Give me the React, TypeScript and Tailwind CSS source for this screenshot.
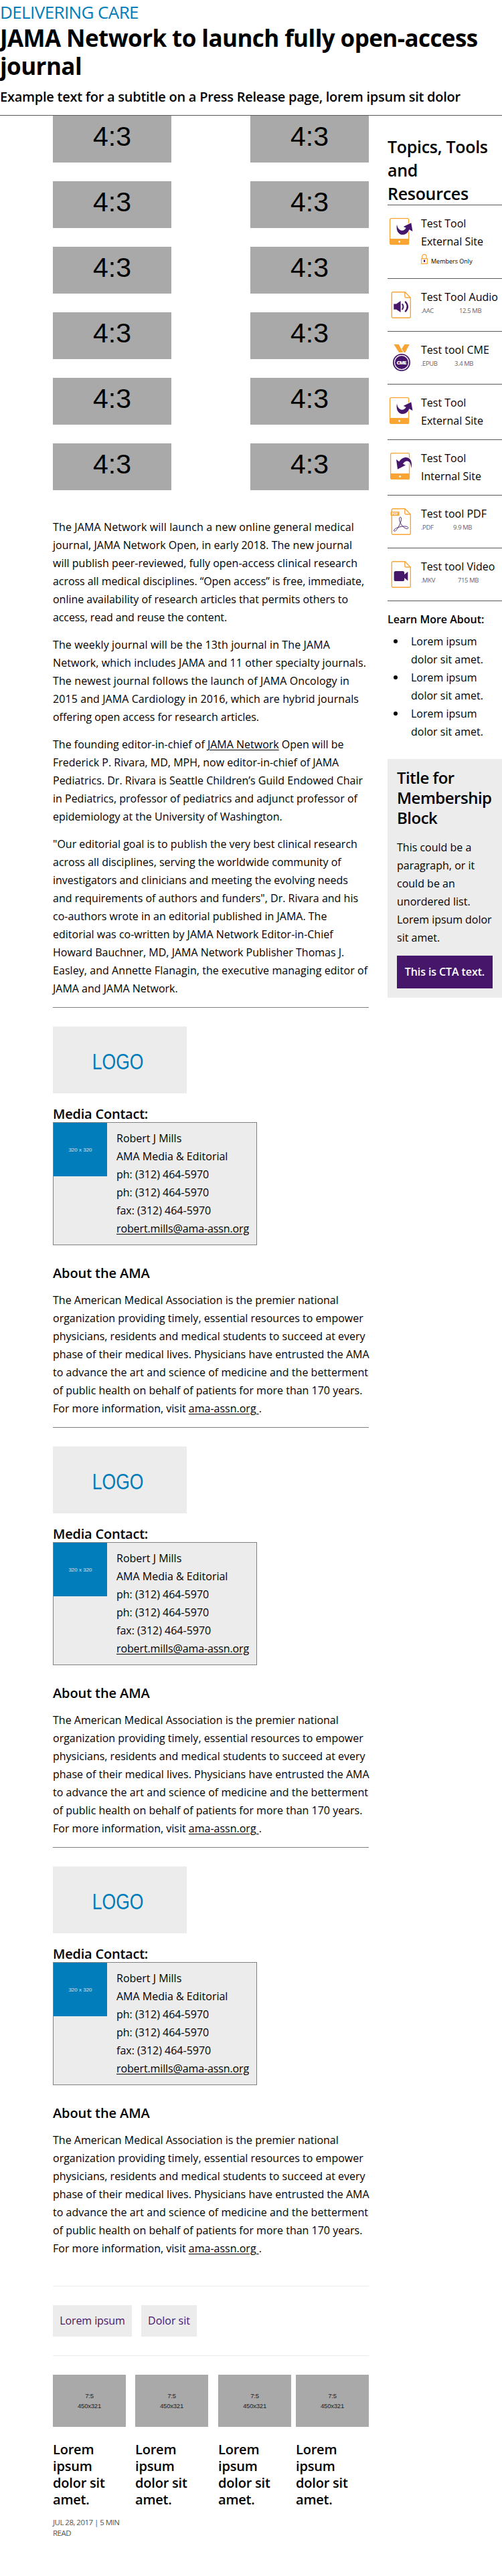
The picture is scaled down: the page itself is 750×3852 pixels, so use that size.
import type { ReactNode } from "react";

const ORANGE = "#f9a533";
const PURPLE = "#46166b";

/* ---------- icons ---------- */

function Tablet({ children, shift }: { children: ReactNode; shift: string }) {
  return (
    <svg className={`h-10 w-[36px] overflow-visible ${shift}`} viewBox="0 0 36 40">
      <rect x="0.6" y="0.6" width="28" height="38.8" rx="2" fill="#fff" stroke={ORANGE} strokeWidth="1.3" />
      <path d="M0.3 31H29v7a2 2 0 0 1-2 2H2.3a2 2 0 0 1-2-2Z" fill={ORANGE} />
      <circle cx="14.6" cy="35.5" r="1.4" fill="#fff" />
      {children}
    </svg>
  );
}

function ExternalIcon() {
  return (
    <Tablet shift="ml-[3px]">
      <path
        d="M11 9.5C9.3 18 13 25 19.3 25C24.3 25 27.7 22 29.3 17.3L34.5 20L32.3 7.3L20.7 13L24.6 14.8C23 17.7 20.7 19.2 18.2 18.8C14.5 18.2 11.8 15 11 9.5Z"
        fill={PURPLE}
        stroke="#fff"
        strokeWidth="1.6"
        paintOrder="stroke"
      />
    </Tablet>
  );
}

function InternalIcon() {
  return (
    <Tablet shift="ml-[4px]">
      <path
        d="M9 10L11 24.7L23 18.5L19 16.7C20.6 13.6 23.3 11.9 26 12.5C29.3 13.2 31 17 31.3 23C33.6 15 30.5 7.3 24 7.1C19.3 7 15.8 9.6 13.4 13.2Z"
        fill={PURPLE}
        stroke="#fff"
        strokeWidth="1.6"
        paintOrder="stroke"
      />
    </Tablet>
  );
}

function Doc({ children }: { children: ReactNode }) {
  return (
    <svg className="ml-[5px] h-10 w-[31px] overflow-visible" viewBox="-0.6 0 31 40">
      <path
        d="M2.2 0.7H20.5L28.7 9.2V37.8a1.5 1.5 0 0 1-1.5 1.5H2.2a1.5 1.5 0 0 1-1.5-1.5V2.2a1.5 1.5 0 0 1 1.5-1.5Z"
        fill="#fff"
        stroke={ORANGE}
        strokeWidth="1.4"
      />
      <path d="M20.3 0.7V7.7a1.3 1.3 0 0 0 1.3 1.3H28.7" fill="none" stroke={ORANGE} strokeWidth="1.4" />
      {children}
    </svg>
  );
}

function AudioIcon() {
  return (
    <Doc>
      <path d="M3.7 18.5H7.5L14 14V31L7.5 26.7H3.7Z" fill={PURPLE} />
      <path d="M16.2 18.3Q19.4 22.6 16.2 27" fill="none" stroke={PURPLE} strokeWidth="2" />
      <path d="M20.6 14.8Q28 22.6 20.6 30.2" fill="none" stroke={PURPLE} strokeWidth="2.3" />
    </Doc>
  );
}

function VideoIcon() {
  return (
    <Doc>
      <rect x="4" y="15" width="15.6" height="15" rx="2.6" fill={PURPLE} />
      <path d="M18.5 21L24.8 15.8V29.4L18.5 24.3Z" fill={PURPLE} />
    </Doc>
  );
}

function PdfIcon() {
  return (
    <Doc>
      <rect x="-1" y="5" width="13" height="6.2" rx="0.6" fill={ORANGE} />
      <text x="5.5" y="10" textAnchor="middle" fontSize="4.8" fontWeight="700" fill="#fff" fontFamily="Open Sans, sans-serif">
        PDF
      </text>
      <path
        d="M13.3 13.2C15.8 12.6 15.4 18 13.4 22.2C10.8 28 7.6 34 5 34.3C3 34.4 3.6 31.6 7.6 29.6C12 27.5 19.2 26.2 23.2 27.4C26.4 28.6 25.6 31.2 22.6 30.6C18.6 29.6 13.8 24.2 12.4 18.6C11.8 15.8 12.1 13.6 13.3 13.2Z"
        fill="none"
        stroke={PURPLE}
        strokeWidth="0.9"
      />
    </Doc>
  );
}

function CmeIcon() {
  return (
    <svg className="ml-[8px] h-10 w-[26px] overflow-visible" viewBox="0 0 26 40">
      <path d="M1.5 0H8.8L15.2 12H9Z" fill={ORANGE} />
      <path d="M17.4 0H24.7L18.4 12H16.4L13.2 6.5Z" fill={ORANGE} />
      <circle cx="13" cy="27" r="13" fill={PURPLE} />
      <circle cx="13" cy="27" r="10.6" fill="none" stroke="#fff" strokeWidth="1.2" />
      <text x="13" y="29.8" textAnchor="middle" fontSize="7.6" fontWeight="800" fill="#fff" fontFamily="Open Sans, sans-serif" textLength="15">
        CME
      </text>
    </svg>
  );
}

function Lock() {
  return (
    <svg className="h-[15px] w-[10px]" viewBox="0 0 10 15">
      <path d="M1.8 7V3.6A3.1 3.1 0 0 1 8.2 3.6V7" fill="none" stroke={ORANGE} strokeWidth="1.2" />
      <rect x="0.6" y="6.6" width="8.8" height="7.8" rx="0.6" fill="#fff" stroke={ORANGE} strokeWidth="1.2" />
      <rect x="4" y="8.6" width="2.2" height="3.2" fill={PURPLE} />
    </svg>
  );
}

/* ---------- text helpers ---------- */

function Line({ children, ls = "" }: { children: ReactNode; ls?: string }) {
  return <span className={`block whitespace-nowrap ${ls}`}>{children}</span>;
}

/* ---------- article ---------- */

function RatioGrid() {
  return (
    <div className="flex flex-col gap-7">
      {[0, 1, 2, 3, 4, 5].map((row) => (
        <div key={row} className="flex justify-between">
          {[0, 1].map((col) => (
            <div
              key={col}
              className="h-[70px] w-[177px] bg-[#a9a9a9] pt-[6px] text-center font-['Liberation_Sans',sans-serif] text-[41px] leading-[50px]"
            >
              4:3
            </div>
          ))}
        </div>
      ))}
    </div>
  );
}

function Article() {
  return (
    <div className="mt-[42px] flex flex-col gap-[14px] text-base leading-[27px]">
      <p>
        <Line ls="tracking-[0.126px]">The JAMA Network will launch a new online general medical</Line>
        <Line ls="tracking-[0.04px]">journal, JAMA Network Open, in early 2018. The new journal</Line>
        <Line ls="tracking-[0.016px]">will publish peer-reviewed, fully open-access clinical research</Line>
        <Line ls="tracking-[-0.055px]">across all medical disciplines. “Open access” is free, immediate,</Line>
        <Line ls="tracking-[-0.027px]">online availability of research articles that permits others to</Line>
        <Line ls="tracking-[-0.114px]">access, read and reuse the content.</Line>
      </p>
      <p>
        <Line ls="tracking-[0.118px]">The weekly journal will be the 13th journal in The JAMA</Line>
        <Line ls="tracking-[0.093px]">Network, which includes JAMA and 11 other specialty journals.</Line>
        <Line ls="tracking-[0.118px]">The newest journal follows the launch of JAMA Oncology in</Line>
        <Line ls="tracking-[0.088px]">2015 and JAMA Cardiology in 2016, which are hybrid journals</Line>
        <Line ls="tracking-[-0.05px]">offering open access for research articles.</Line>
      </p>
      <p>
        <Line>
          The founding editor-in-chief of <a className="underline underline-offset-2">JAMA Network</a> Open will be
        </Line>
        <Line>Frederick P. Rivara, MD, MPH, now editor-in-chief of JAMA</Line>
        <Line>Pediatrics. Dr. Rivara is Seattle Children’s Guild Endowed Chair</Line>
        <Line>in Pediatrics, professor of pediatrics and adjunct professor of</Line>
        <Line>epidemiology at the University of Washington.</Line>
      </p>
      <p>
        <Line>"Our editorial goal is to publish the very best clinical research</Line>
        <Line>across all disciplines, serving the worldwide community of</Line>
        <Line>investigators and clinicians and meeting the evolving needs</Line>
        <Line>and requirements of authors and funders", Dr. Rivara and his</Line>
        <Line>co-authors wrote in an editorial published in JAMA. The</Line>
        <Line>editorial was co-written by JAMA Network Editor-in-Chief</Line>
        <Line>Howard Bauchner, MD, JAMA Network Publisher Thomas J.</Line>
        <Line ls="tracking-[0.06px]">Easley, and Annette Flanagin, the executive managing editor of</Line>
        <Line>JAMA and JAMA Network.</Line>
      </p>
    </div>
  );
}

function ContactBlock() {
  return (
    <section>
      <hr className="mt-[14px] border-t border-[#808080]" />
      <div className="mt-7 flex h-[100px] w-[200px] justify-center bg-[#ececec] pt-[33px]">
        <span className="-ml-[6px] scale-x-[0.78] font-['Liberation_Sans',sans-serif] text-[34px] leading-[39px] text-[#007dba]">
          LOGO
        </span>
      </div>
      <h3 className="mt-[18px] text-xl leading-[25px] font-semibold tracking-[-0.22px]">Media Contact:</h3>
      <div className="flex h-[184px] w-[305px] border border-[#808080] bg-[#ececec]">
        <div className="flex size-20 items-center justify-center bg-[#007dba] pt-[2px] font-['Liberation_Sans',sans-serif] text-[8px] text-white/80">
          320 x 320
        </div>
        <div className="pt-[10px] pl-[14px] text-base leading-[27px]">
          <Line>Robert J Mills</Line>
          <Line>AMA Media &amp; Editorial</Line>
          <Line>ph: (312) 464-5970</Line>
          <Line>ph: (312) 464-5970</Line>
          <Line>fax: (312) 464-5970</Line>
          <Line ls="tracking-[-0.12px]">
            <a className="underline underline-offset-2">robert.mills@ama-assn.org</a>
          </Line>
        </div>
      </div>
      <h3 className="mt-[30px] text-xl leading-6 font-semibold tracking-[-0.1px]">About the AMA</h3>
      <p className="mt-[15px] text-base leading-[27px]">
        <Line>The American Medical Association is the premier national</Line>
        <Line>organization providing timely, essential resources to empower</Line>
        <Line>physicians, residents and medical students to succeed at every</Line>
        <Line>phase of their medical lives. Physicians have entrusted the AMA</Line>
        <Line ls="tracking-[0.033px]">to advance the art and science of medicine and the betterment</Line>
        <Line>of public health on behalf of patients for more than 170 years.</Line>
        <Line>
          For more information, visit <a className="underline underline-offset-2">ama-assn.org </a>.
        </Line>
      </p>
    </section>
  );
}

function Tags() {
  return (
    <div className="mt-[42px] flex gap-[14px] border-y border-[#ececec] py-7 text-base leading-[27px] text-[#46166b]">
      <a className="h-[47px] w-[118px] bg-[#ececec] py-[10px] text-center tracking-[-0.1px]">Lorem ipsum</a>
      <a className="h-[47px] w-[83px] bg-[#ececec] py-[10px] text-center">Dolor sit</a>
    </div>
  );
}

function StoryCard({ meta }: { meta?: boolean }) {
  return (
    <div className="w-[109px]">
      <div className="flex h-[78px] flex-col bg-[#a9a9a9] pt-[24px] text-center font-['Liberation_Sans',sans-serif] text-[9.5px] leading-[15px] tracking-[-0.2px] text-[#222]">
        <span>7:5</span>
        <span>450x321</span>
      </div>
      <h4 className="mt-[21px] text-xl leading-[25px] font-semibold tracking-[-0.2px]">
        <Line>Lorem</Line>
        <Line>ipsum</Line>
        <Line>dolor sit</Line>
        <Line>amet.</Line>
      </h4>
      {meta && (
        <p className="mt-[14px] text-[11.5px] leading-4 tracking-[-0.53px] text-[#555]">
          <Line>JUL 28, 2017 | 5 MIN</Line>
          <Line>READ</Line>
        </p>
      )}
    </div>
  );
}

/* ---------- sidebar ---------- */

function Tool({ icon, lines, height, children }: { icon: ReactNode; lines: string[]; height: string; children?: ReactNode }) {
  return (
    <li className={`flex border-b border-[#58595b] pt-[14px] ${height}`}>
      <div className="w-[50px] shrink-0 pt-[5px]">{icon}</div>
      <div className="text-base leading-[27px]">
        {lines.map((l) => (
          <Line key={l}>{l}</Line>
        ))}
        {children}
      </div>
    </li>
  );
}

function Meta({ ext, size, width }: { ext: string; size: string; width: string }) {
  return (
    <div className="flex text-[9.5px] leading-[14px] tracking-[-0.4px] text-[#666]">
      <span className={width}>{ext}</span>
      <span>{size}</span>
    </div>
  );
}

function Sidebar() {
  return (
    <aside className="ml-7 w-[171px]">
      <h2 className="mt-[29px] h-[105px] border-b border-[#58595b] text-[25px] leading-[35px] font-semibold tracking-[-0.3px]">
        <Line>Topics, Tools</Line>
        <Line>and</Line>
        <Line>Resources</Line>
      </h2>
      <ul>
        <Tool icon={<ExternalIcon />} lines={["Test Tool", "External Site"]} height="h-[110px]">
          <div className="flex pt-[5px]">
            <Lock />
            <span className="pt-[4px] pl-[5px] text-[9px] leading-[14px]">Members Only</span>
          </div>
        </Tool>
        <Tool icon={<AudioIcon />} lines={["Test Tool Audio"]} height="h-[79px]">
          <Meta ext=".AAC" size="12.5 MB" width="w-[57px]" />
        </Tool>
        <Tool icon={<CmeIcon />} lines={["Test tool CME"]} height="h-[79px]">
          <Meta ext=".EPUB" size="3.4 MB" width="w-[50px]" />
        </Tool>
        <Tool icon={<ExternalIcon />} lines={["Test Tool", "External Site"]} height="h-[83px]" />
        <Tool icon={<InternalIcon />} lines={["Test Tool", "Internal Site"]} height="h-[83px]" />
        <Tool icon={<PdfIcon />} lines={["Test tool PDF"]} height="h-[79px]">
          <Meta ext=".PDF" size="9.9 MB" width="w-[48px]" />
        </Tool>
        <Tool icon={<VideoIcon />} lines={["Test tool Video"]} height="h-[79px]">
          <Meta ext=".MKV" size="715 MB" width="w-[55px]" />
        </Tool>
      </ul>

      <h3 className="mt-[15px] text-base leading-6 font-semibold">Learn More About:</h3>
      <ul className="mt-2 text-base leading-[27px]">
        {[0, 1, 2].map((i) => (
          <li key={i} className="flex pl-[9px]">
            <span className="mt-[10px] mr-[20px] size-[6px] shrink-0 rounded-full bg-black" />
            <div>
              <Line>Lorem ipsum</Line>
              <Line>dolor sit amet.</Line>
            </div>
          </li>
        ))}
      </ul>

      <div className="mt-[27px] h-[357px] bg-[#ececec] px-[14px] pt-[13px]">
        <h3 className="text-2xl leading-[30px] font-semibold tracking-[-0.5px]">
          <Line>Title for</Line>
          <Line>Membership</Line>
          <Line>Block</Line>
        </h3>
        <p className="mt-4 text-base leading-[27px]">
          <Line>This could be a</Line>
          <Line>paragraph, or it</Line>
          <Line>could be an</Line>
          <Line>unordered list.</Line>
          <Line ls="tracking-[-0.05px]">Lorem ipsum dolor</Line>
          <Line>sit amet.</Line>
        </p>
        <a className="mt-[13px] block h-[49px] bg-[#46166b] text-center text-base leading-[49px] font-semibold tracking-[-0.1px] text-white">
          This is CTA text.
        </a>
      </div>
    </aside>
  );
}

/* ---------- page ---------- */

export default function App() {
  return (
    <div className="h-[3852px] w-[750px] overflow-hidden bg-white font-['Open_Sans',sans-serif] text-black">
      <header className="h-[173px] border-b border-[#58595b]">
        <div className="text-[26px] leading-9 tracking-[-0.6px] text-[#007dba]">DELIVERING CARE</div>
        <h1 className="text-[35px] leading-[42px] font-bold tracking-[-0.58px]">
          <Line>JAMA Network to launch fully open-access</Line>
          <Line>journal</Line>
        </h1>
        <p className="mt-[10px] text-xl leading-[30px] font-semibold tracking-[-0.26px] whitespace-nowrap">
          Example text for a subtitle on a Press Release page, lorem ipsum sit dolor
        </p>
      </header>

      <div className="flex items-start pl-[79px]">
        <main className="w-[472px]">
          <RatioGrid />
          <Article />
          <ContactBlock />
          <ContactBlock />
          <ContactBlock />
          <Tags />
          <div className="mt-7 flex">
            <StoryCard meta />
            <div className="ml-[14px]">
              <StoryCard />
            </div>
            <div className="ml-[15px]">
              <StoryCard />
            </div>
            <div className="ml-[7px]">
              <StoryCard />
            </div>
          </div>
        </main>
        <Sidebar />
      </div>
    </div>
  );
}
